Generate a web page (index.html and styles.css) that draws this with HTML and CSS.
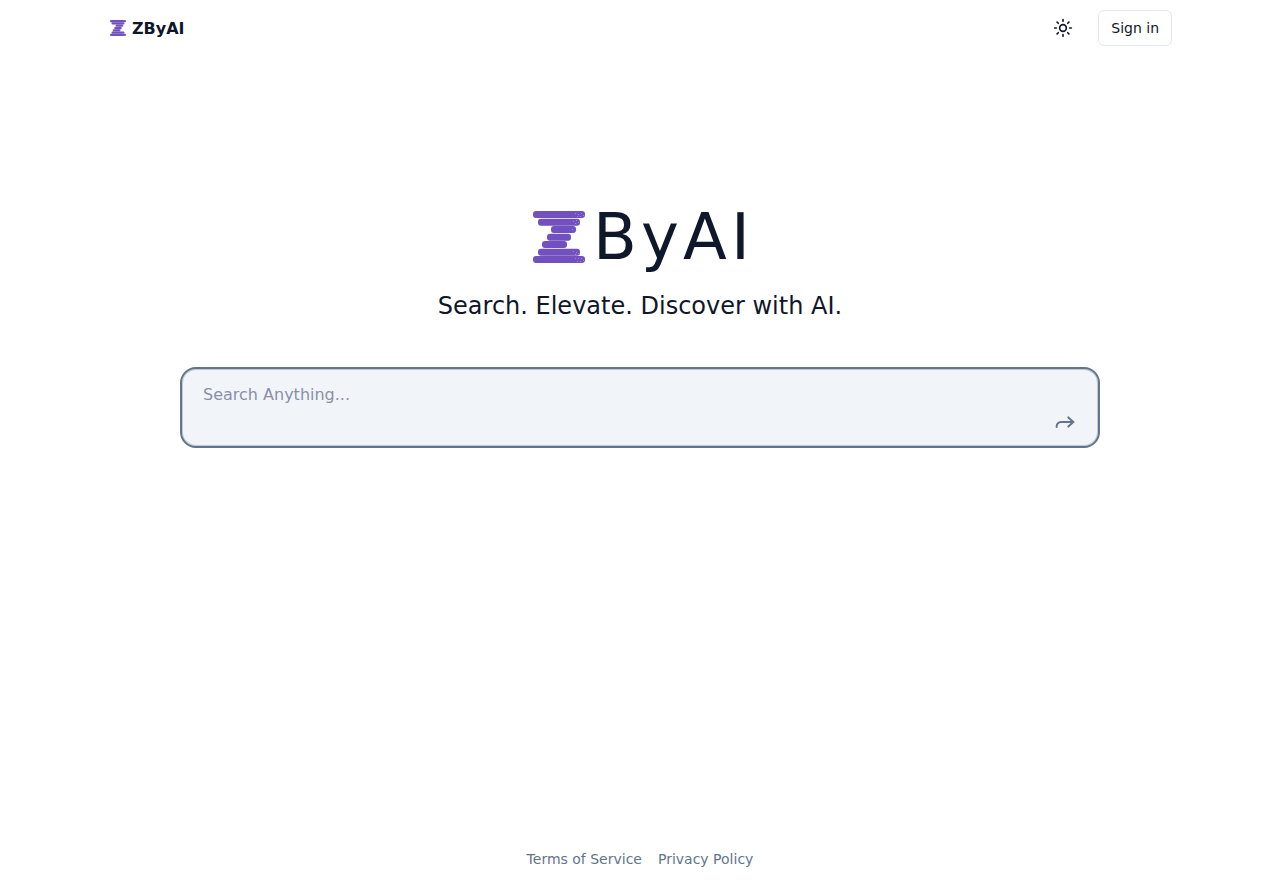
FILE: index.html
```html
<!DOCTYPE html>
<html lang="en">
<head>
<meta charset="utf-8">
<title>ZByAI</title>
<link rel="stylesheet" href="styles.css">
</head>
<body>
<div class="page">
  <header class="topbar">
    <a class="brand" href="#">
      <svg class="brand-logo" viewBox="0 0 52 52"><use href="#zlogo"/></svg>
      <span>ZByAI</span>
    </a>
    <div class="actions">
      <button class="theme" aria-label="Toggle theme">
        <svg viewBox="0 0 24 24" fill="none" stroke="currentColor" stroke-width="2" stroke-linecap="round" stroke-linejoin="round"><circle cx="12" cy="12" r="4"/><path d="M12 2v2M12 20v2M4.93 4.93l1.41 1.41M17.66 17.66l1.41 1.41M2 12h2M20 12h2M6.34 17.66l-1.41 1.41M19.07 4.93l-1.41 1.41"/></svg>
      </button>
      <button class="signin">Sign in</button>
    </div>
  </header>
  <main class="main">
    <div class="hero">
      <svg class="hero-logo" viewBox="0 0 52 52">
        <defs>
          <g id="zlogo" fill="#7350c0">
            <rect x="0" y="0" width="52" height="7" rx="3"/>
            <rect x="5" y="7.7" width="42" height="7" rx="3"/>
            <rect x="18" y="15" width="25" height="7" rx="3"/>
            <rect x="14" y="22.7" width="24" height="7" rx="3"/>
            <rect x="9" y="30" width="25" height="7" rx="3"/>
            <rect x="5" y="37.7" width="42" height="7" rx="3"/>
            <rect x="0" y="45" width="52" height="7" rx="3"/>
            <g fill="#9f87d6">
              <rect x="42" y="2" width="1" height="1"/><rect x="45" y="3" width="1" height="1"/><rect x="48" y="2" width="1" height="1"/><rect x="44" y="5" width="1" height="1"/><rect x="47" y="5" width="1" height="1"/><rect x="50" y="4" width="1" height="1"/>
              <rect x="40" y="10" width="1" height="1"/><rect x="43" y="9" width="1" height="1"/><rect x="42" y="12" width="1" height="1"/><rect x="45" y="11" width="1" height="1"/>
              <rect x="39" y="18" width="1" height="1"/>
              <rect x="40" y="40" width="1" height="1"/><rect x="43" y="41" width="1" height="1"/><rect x="42" y="43" width="1" height="1"/><rect x="45" y="42" width="1" height="1"/>
              <rect x="42" y="47" width="1" height="1"/><rect x="45" y="47" width="1" height="1"/><rect x="48" y="47" width="1" height="1"/><rect x="44" y="50" width="1" height="1"/><rect x="47" y="50" width="1" height="1"/><rect x="50" y="49" width="1" height="1"/>
            </g>
          </g>
        </defs>
        <use href="#zlogo"/>
      </svg>
      <h1 class="hero-title">ByAI</h1>
    </div>
    <p class="tagline">Search. Elevate. Discover with AI.</p>
    <form class="search">
      <textarea class="search-input" placeholder="Search Anything..." rows="1"></textarea>
      <button class="send" type="button" aria-label="Send">
        <svg viewBox="0 0 24 24" fill="none" stroke="currentColor" stroke-width="2.4" stroke-linecap="round" stroke-linejoin="round"><path d="M16 6.5l6 5.5-6 5.5"/><path d="M22 12H7a5 5 0 0 0-5 5v1"/></svg>
      </button>
    </form>
  </main>
  <footer class="footer">
    <a href="#">Terms of Service</a>
    <a href="#">Privacy Policy</a>
  </footer>
</div>
</body>
</html>
```
FILE: styles.css
```css
* { box-sizing: border-box; }
html, body { margin: 0; height: 100%; }
body {
  font-family: "DejaVu Sans", sans-serif;
  color: #0f172a;
  background: #fff;
}
.page {
  height: 885px;
  display: flex;
  flex-direction: column;
  overflow: hidden;
}
.topbar {
  height: 56px;
  padding: 0 108px 0 110px;
  display: flex;
  align-items: center;
  justify-content: space-between;
}
.brand {
  display: flex;
  align-items: center;
  gap: 6px;
  color: #0f172a;
  text-decoration: none;
  font-size: 16px;
  font-weight: 700;
}
.brand-logo { width: 16px; height: 16px; display: block; }
.actions { display: flex; align-items: center; gap: 8px; }
.theme {
  width: 36px;
  height: 36px;
  padding: 0;
  border: 0;
  background: none;
  color: #0f172a;
  display: flex;
  align-items: center;
  justify-content: center;
  margin-right: 9px;
}
.theme svg { width: 20px; height: 20px; }
.signin {
  height: 36px;
  padding: 0 12px;
  border: 1px solid #e2e8f0;
  border-radius: 6px;
  background: #fff;
  color: #0f172a;
  font: 14px "DejaVu Sans", sans-serif;
}
.main {
  flex: 1;
  display: flex;
  flex-direction: column;
  align-items: center;
  padding-top: 144px;
}
.hero { display: flex; align-items: center; gap: 8px; height: 72px; margin-left: 7px; }
.hero-logo { width: 52px; height: 52px; display: block; margin-top: 1px; }
.hero-title {
  margin: 2px 0 0;
  font-size: 64px;
  font-weight: 400;
  line-height: 72px;
  letter-spacing: 4.2px;
}
.tagline {
  margin: 18px 0 0;
  font-size: 24px;
  line-height: 32px;
}
.search {
  position: relative;
  margin-top: 45px;
  width: 920px;
  height: 81px;
  background: #f1f5f9;
  border: 2px solid #64748b;
  border-radius: 16px;
  box-shadow: inset 0 0 0 1px rgba(100, 116, 139, 0.35);
}
.search-input {
  display: block;
  width: 100%;
  height: 100%;
  padding: 14px 21px;
  border: 0;
  outline: 0;
  resize: none;
  background: transparent;
  color: #0f172a;
  font: 16px/24px "DejaVu Sans", sans-serif;
}
.search-input::placeholder { color: #8b8fa6; opacity: 1; }
.send {
  position: absolute;
  right: 23px;
  bottom: 14px;
  width: 20px;
  height: 20px;
  padding: 0;
  border: 0;
  background: none;
  color: #64748b;
}
.send svg { width: 20px; height: 20px; display: block; }
.footer {
  height: 52px;
  display: flex;
  justify-content: center;
  gap: 16px;
  padding-top: 16px;
  font-size: 14px;
  line-height: 20px;
}
.footer a { color: #64748b; text-decoration: none; }
```
